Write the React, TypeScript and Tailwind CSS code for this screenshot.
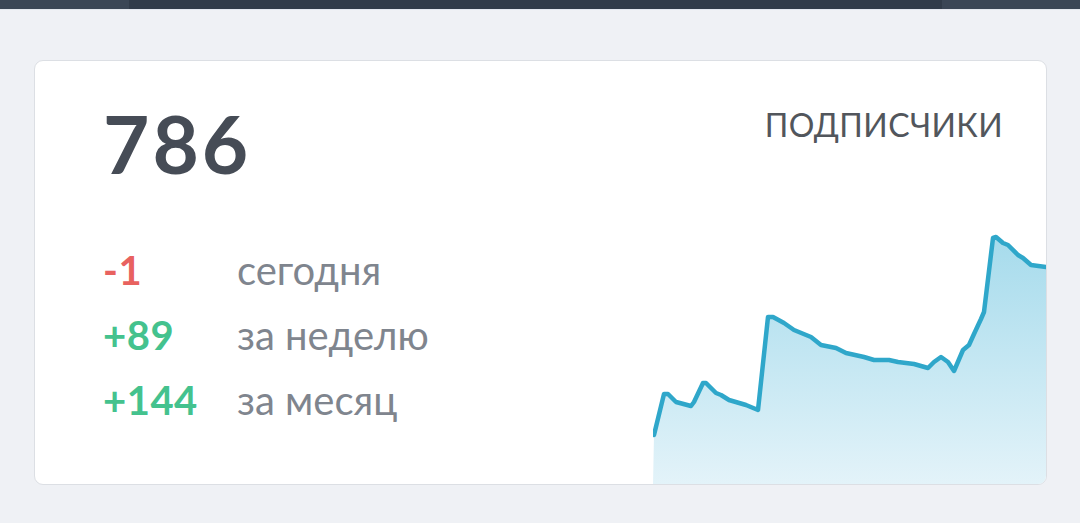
import React from "react";

const pts: [number, number][] = [
  [653, 433], [663, 392], [667, 392], [675, 400], [690, 404], [693, 400],
  [702, 381], [705, 381], [715, 391], [720, 393], [728, 398], [745, 403],
  [757, 408], [767, 315], [772, 315], [783, 321], [793, 328], [810, 335],
  [820, 343], [835, 346], [845, 351], [863, 355], [873, 358], [888, 358],
  [897, 360], [913, 362], [927, 366], [933, 360], [940, 355], [947, 360],
  [953, 369], [962, 348], [968, 343], [973, 332], [980, 317], [983, 310],
  [992, 236], [995, 235], [1002, 241], [1007, 243], [1017, 253], [1022, 256],
  [1030, 263], [1045, 265],
];

function Sparkline() {
  // local coords: chart box starts at x=652, y=220
  const line = pts.map(([x, y], i) => `${i ? "L" : "M"}${x - 652} ${y - 220}`).join(" ");
  const area = `${line} L393 262 L0 262 Z`;
  return (
    <svg width="393" height="262" viewBox="0 0 393 262" className="block">
      <defs>
        <linearGradient id="fill" x1="0" y1="0" x2="0" y2="1">
          <stop offset="0%" stopColor="#a6dbec" />
          <stop offset="100%" stopColor="#e3f3f9" />
        </linearGradient>
      </defs>
      <path d={area} fill="url(#fill)" />
      <path d={line} fill="none" stroke="#2fa7ca" strokeWidth="4.5" strokeLinejoin="round" strokeLinecap="round" />
    </svg>
  );
}

const rows = [
  { value: "-1", label: "сегодня", color: "text-[#e8625f]" },
  { value: "+89", label: "за неделю", color: "text-[#44c28e]" },
  { value: "+144", label: "за месяц", color: "text-[#44c28e]" },
];

export default function App() {
  return (
    <div className="w-[1080px] h-[523px] bg-[#eff1f5] overflow-hidden" style={{ fontFamily: "Lato, 'Noto Sans', sans-serif" }}>
      {/* top bar */}
      <div className="flex h-[9px] bg-[#3b4656]">
        <div className="w-[129px]" />
        <div className="w-[813px] bg-[#313b4a]" />
      </div>
      <div className="h-px bg-[#e3e6ee]" />

      <div className="pt-[50px] pl-[34px]">
        <div className="w-[1013px] h-[425px] bg-white border border-[#dcdfe4] rounded-[9px] overflow-hidden flex">
          {/* left */}
          <div className="flex-1 pl-[68px] pt-[42px]">
            <div className="text-[80px] leading-[80px] font-bold text-[#464c56] tracking-[3px]">786</div>
            <div className="mt-[55px] grid grid-cols-[134px_auto] text-[40px] leading-[65px]">
              {rows.map((r) => (
                <React.Fragment key={r.label}>
                  <div className={`font-bold tracking-[0.5px] ${r.color}`}>{r.value}</div>
                  <div className="text-[#7f858e]">{r.label}</div>
                </React.Fragment>
              ))}
            </div>
          </div>
          {/* right */}
          <div className="flex flex-col items-end">
            <div className="pr-[43px] pt-[44px] text-[32px] leading-[40px] tracking-[0.4px] text-[#52565c]">ПОДПИСЧИКИ</div>
            <div className="mt-auto">
              <Sparkline />
            </div>
          </div>
        </div>
      </div>
    </div>
  );
}
